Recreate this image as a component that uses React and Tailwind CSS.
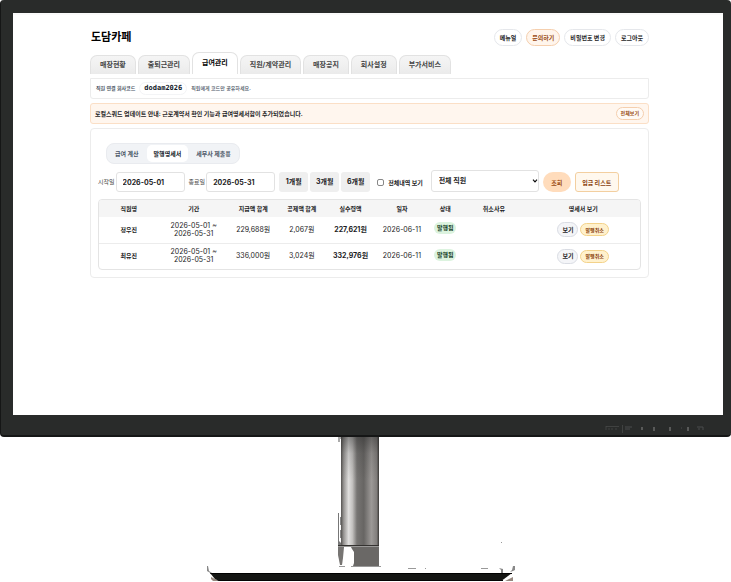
import React, { useState } from "react";

const TABS = ["매장현황", "출퇴근관리", "급여관리", "직원/계약관리", "매장공지", "회사설정", "부가서비스"];
const SUB_TABS = ["급여 계산", "발행명세서", "세무사 제출용"];
const MONTHS = ["1개월", "3개월", "6개월"];

const COLUMNS = [
  { label: "직원명", width: "w-[11%]" },
  { label: "기간", width: "w-[13%]" },
  { label: "지급액 합계", width: "w-[9%]" },
  { label: "공제액 합계", width: "w-[9%]" },
  { label: "실수령액", width: "w-[9%]" },
  { label: "일자", width: "w-[10%]" },
  { label: "상태", width: "w-[6%]" },
  { label: "취소사유", width: "w-[12%]" },
  { label: "명세서 보기", width: "w-[21%]" },
];

const ROWS = [
  { name: "정우진", from: "2026-05-01", to: "2026-05-31", pay: "229,688원", cut: "2,067원", net: "227,621원", date: "2026-06-11" },
  { name: "최유진", from: "2026-05-01", to: "2026-05-31", pay: "336,000원", cut: "3,024원", net: "332,976원", date: "2026-06-11" },
];

function Header() {
  const pill = "h-[17px] rounded-full border px-[5px] text-[6px] font-bold";
  return (
    <header className="flex items-center justify-between">
      <h1 className="pl-px text-[11px] leading-[17px] font-bold text-black">도담카페</h1>
      <div className="flex gap-1">
        <button className={`${pill} border-gray-200 bg-white`}>메뉴얼</button>
        <button className={`${pill} border-[#f5cfae] bg-[#fff5ec] text-[#9a4a12]`}>문의하기</button>
        <button className={`${pill} border-gray-200 bg-white`}>비밀번호 변경</button>
        <button className={`${pill} border-gray-200 bg-white`}>로그아웃</button>
      </div>
    </header>
  );
}

function Tabs() {
  const [active, setActive] = useState("급여관리");
  return (
    <nav className="mt-[6px] flex items-end gap-[2px]">
      {TABS.map((tab) => (
        <button
          key={tab}
          onClick={() => setActive(tab)}
          className={`rounded-t-[7px] border border-b-0 border-[#e2e2e2] px-[9px] text-[7px] font-bold ${
            tab === active
              ? "h-[22px] bg-white text-black"
              : "h-[19px] bg-linear-to-b from-[#f5f5f5] to-[#ebebeb] text-[#444]"
          }`}
        >
          {tab}
        </button>
      ))}
    </nav>
  );
}

function Filters() {
  const input = "h-5 w-[69px] rounded-[3px] border border-[#e2e2e2] px-[6px] text-[7px] font-bold";
  return (
    <div className="mt-[6px] flex items-end">
      <label htmlFor="from" className="mr-px text-[6px] leading-5 text-[#444]">시작일</label>
      <input id="from" defaultValue="2026-05-01" className={input} />
      <label htmlFor="to" className="mr-px ml-1 text-[6px] leading-5 text-[#444]">종료일</label>
      <input id="to" defaultValue="2026-05-31" className={input} />
      <div className="ml-1 flex gap-[2px]">
        {MONTHS.map((m) => (
          <button key={m} className="h-5 w-[29px] rounded-[3px] bg-[#efefef] text-[7px] font-bold">
            {m}
          </button>
        ))}
      </div>
      <label className="ml-[7px] flex h-5 items-center gap-1 text-[6px] font-bold">
        <input type="checkbox" className="size-[7px] appearance-none rounded-[2px] border border-[#888] bg-white checked:bg-blue-600" />
        전체내역 보기
      </label>
      <div className="relative ml-2 w-[108px]">
        <select
          aria-label="직원"
          className="block h-[22px] w-full appearance-none rounded-[3px] border border-[#e2e2e2] bg-white px-[7px] text-[7px] font-bold"
        >
          <option>전체 직원</option>
          <option>정우진</option>
          <option>최유진</option>
        </select>
        <svg viewBox="0 0 6 4" className="pointer-events-none absolute top-[9px] right-[1px] h-1 w-[6px]" fill="none" stroke="#111" strokeWidth="1.2">
          <path d="M1 0.700 3 2.900 5 0.700" />
        </svg>
      </div>
      <button className="ml-1 h-5 w-7 rounded-full bg-[#ffdcbc] text-[6px] font-bold text-[#9a4a12]">조회</button>
      <button className="ml-1 h-5 w-11 rounded-[3px] border border-[#f3cfa0] bg-[#fff8ee] text-[6px] font-bold text-[#8a3f0c]">
        입금 리스트
      </button>
    </div>
  );
}

function PayslipTable() {
  return (
    <div className="mt-[7px] overflow-hidden rounded-[4px] border border-[#e4e4e4]">
      <table className="w-full table-fixed text-center text-[7px] leading-[8px]">
        <thead>
          <tr className="h-[17px] bg-[#f5f5f5] text-[6px]">
            {COLUMNS.map((col) => (
              <th key={col.label} className={`${col.width} p-0 font-bold whitespace-nowrap`}>
                {col.label}
              </th>
            ))}
          </tr>
        </thead>
        <tbody>
          {ROWS.map((row) => (
            <tr key={row.name} className="h-[26px] border-t border-[#ececec] first:border-t-0">
              <td className="text-[6px] font-bold">{row.name}</td>
              <td>
                {row.from} ~<br />
                {row.to}
              </td>
              <td>{row.pay}</td>
              <td>{row.cut}</td>
              <td className="font-bold">{row.net}</td>
              <td className="whitespace-nowrap">{row.date}</td>
              <td className="pb-[3px]">
                <span className="inline-block rounded-full bg-[#dcf3df] px-[3px] text-[6px] leading-[12px] font-bold whitespace-nowrap text-[#17401f]">
                  발행됨
                </span>
              </td>
              <td />
              <td>
                <div className="flex items-center justify-center gap-[2px]">
                  <button className="h-[15px] rounded-full border border-[#d9dce3] bg-[#f4f5f8] px-1 text-[6px] font-semibold">
                    보기
                  </button>
                  <button className="h-[13px] rounded-full border border-[#f3d28a] bg-[#fff1cd] px-1 text-[5px] font-bold text-[#8a3f0c]">
                    발행취소
                  </button>
                </div>
              </td>
            </tr>
          ))}
        </tbody>
      </table>
    </div>
  );
}

function Stand() {
  return (
    <svg viewBox="0 437 731 145" className="block w-full" aria-hidden="true">
      <defs>
        <linearGradient id="pole">
          <stop offset="0" stopColor="#555351" />
          <stop offset="0.07" stopColor="#969492" />
          <stop offset="0.2" stopColor="#e0dfde" />
          <stop offset="0.3" stopColor="#c4c2c0" />
          <stop offset="0.42" stopColor="#777573" />
          <stop offset="0.6" stopColor="#676563" />
          <stop offset="0.8" stopColor="#9c9997" />
          <stop offset="0.94" stopColor="#817e7c" />
          <stop offset="1" stopColor="#393735" />
        </linearGradient>
        <linearGradient id="shade" x2="0" y2="1">
          <stop offset="0" stopColor="#222" stopOpacity="0.45" />
          <stop offset="0.15" stopColor="#222" stopOpacity="0.15" />
          <stop offset="0.4" stopColor="#222" stopOpacity="0" />
        </linearGradient>
      </defs>
      <path d="M338 437h3v2h-1v3h-2z" fill="#aaa" />
      <path d="M341 437h38v109h-38z" fill="url(#pole)" />
      <path d="M341 437h38v109h-38z" fill="url(#shade)" />
      <path d="M338 513h1v28l2 2v3h-3z" fill="#777" />
      <path d="M340 517h1v8h-1zM340 530h1v8h-1z" fill="#888" />
      <path d="M338 545h41v1.500h-41z" fill="#343230" />
      <path d="M338 547h6l-1 11-1 7h-2l-2-10z" fill="#777573" />
      <path d="M351 547h28v20h-26v-1l1-3v-11l-2-3z" fill="#6a6866" />
      <path d="M339 566h6v1h-6zM351 566h30v1h-30zM408 568h8v1h-8zM425 568h1v1h-1zM481 568h7v1h-7zM501 542h1v1h-1z" fill="#999" />
      <path d="M207 566h1l1 5 3 2v1l-5-3zM515 566h-2l-1 4-2 2 3-1 2-1zM499 568l4 1v4h-2v-3z" fill="#888" />
      <path d="M211 577l8 4h-6l-2-2zM513 577l-8 4h8z" fill="#96887f" />
      <path d="M210 573h302l-8 6-3 2H219l-4-2z" fill="#151614" />
      <path d="M210 573h302v1H211z" fill="#020202" />
      <path d="M217 580h286v1H219z" fill="#050505" />
    </svg>
  );
}

function BezelControls() {
  return (
    <svg viewBox="0 0 102 8" className="h-2 w-[102px]" fill="none" stroke="#4b4c4c" aria-hidden="true">
      <path d="M1 1.500h13M1 1v4M4 3v2M7 3v2M11 3v2M17.500 0v8" strokeWidth="0.7" />
      <path d="M20 2h7M20 4h5" />
      <path d="M37 2v3M49 2v4M65 2v4M83 2v4" strokeWidth="1.500" stroke="#686968" />
      <path d="M76 3h1M92 2h6v3M93 4h2" />
    </svg>
  );
}

export default function App() {
  return (
    <div className="bg-white font-['Inter','Noto_Sans_CJK_KR',sans-serif] text-[#1c1c1e]">
      <div className="rounded-[4px] border-b-2 border-l border-[#151616] bg-[#292b2a] pt-[13px] pr-2 pl-3">
        <main className="min-h-[402px] border-t-2 border-[#fafafa] bg-white pt-[14px] pr-[74px] pl-[77px]">
          <Header />
          <Tabs />
          <section className="mt-1 flex h-[21px] items-center rounded-b-[3px] border border-[#ececec] px-[5px] text-[5px] text-gray-600">
            <span className="font-semibold">직원 연결 회사코드</span>
            <code className="mx-1 rounded-full border border-gray-100 px-1 font-['DejaVu_Sans_Mono',monospace] text-[7px] leading-[11px] font-bold text-gray-900">
              dodam2026
            </code>
            <span className="font-medium">직원에게 코드만 공유하세요.</span>
          </section>
          <section className="mt-1 flex h-[21px] items-center justify-between rounded-[3px] border border-[#fbdfc6] bg-[#fff6ee] px-1 text-[6px] font-semibold">
            <p>로컬스쿼드 업데이트 안내: 근로계약서 확인 기능과 급여명세서함이 추가되었습니다.</p>
            <button className="h-[13px] rounded-full border border-[#f5cfae] bg-[#fffaf5] px-1 text-[5px] font-bold text-[#9a4a12]">
              전체보기
            </button>
          </section>
          <section className="mt-1 rounded-[4px] border border-[#ececec] px-[7px] pt-[14px] pb-[7px]">
            <div className="ml-2 flex w-fit gap-px rounded-lg border border-[#e9ebef] bg-[#f1f3f6] p-[1px]">
              {SUB_TABS.map((tab) => (
                <button
                  key={tab}
                  className={`h-[17px] rounded-[5px] px-[7px] text-[6px] ${
                    tab === "발행명세서" ? "bg-white font-bold text-gray-900" : "font-semibold text-gray-600"
                  }`}
                >
                  {tab}
                </button>
              ))}
            </div>
            <Filters />
            <PayslipTable />
          </section>
        </main>
        <div className="flex h-5 items-end justify-end pr-4 pb-[2px]">
          <BezelControls />
        </div>
      </div>
      <Stand />
    </div>
  );
}
